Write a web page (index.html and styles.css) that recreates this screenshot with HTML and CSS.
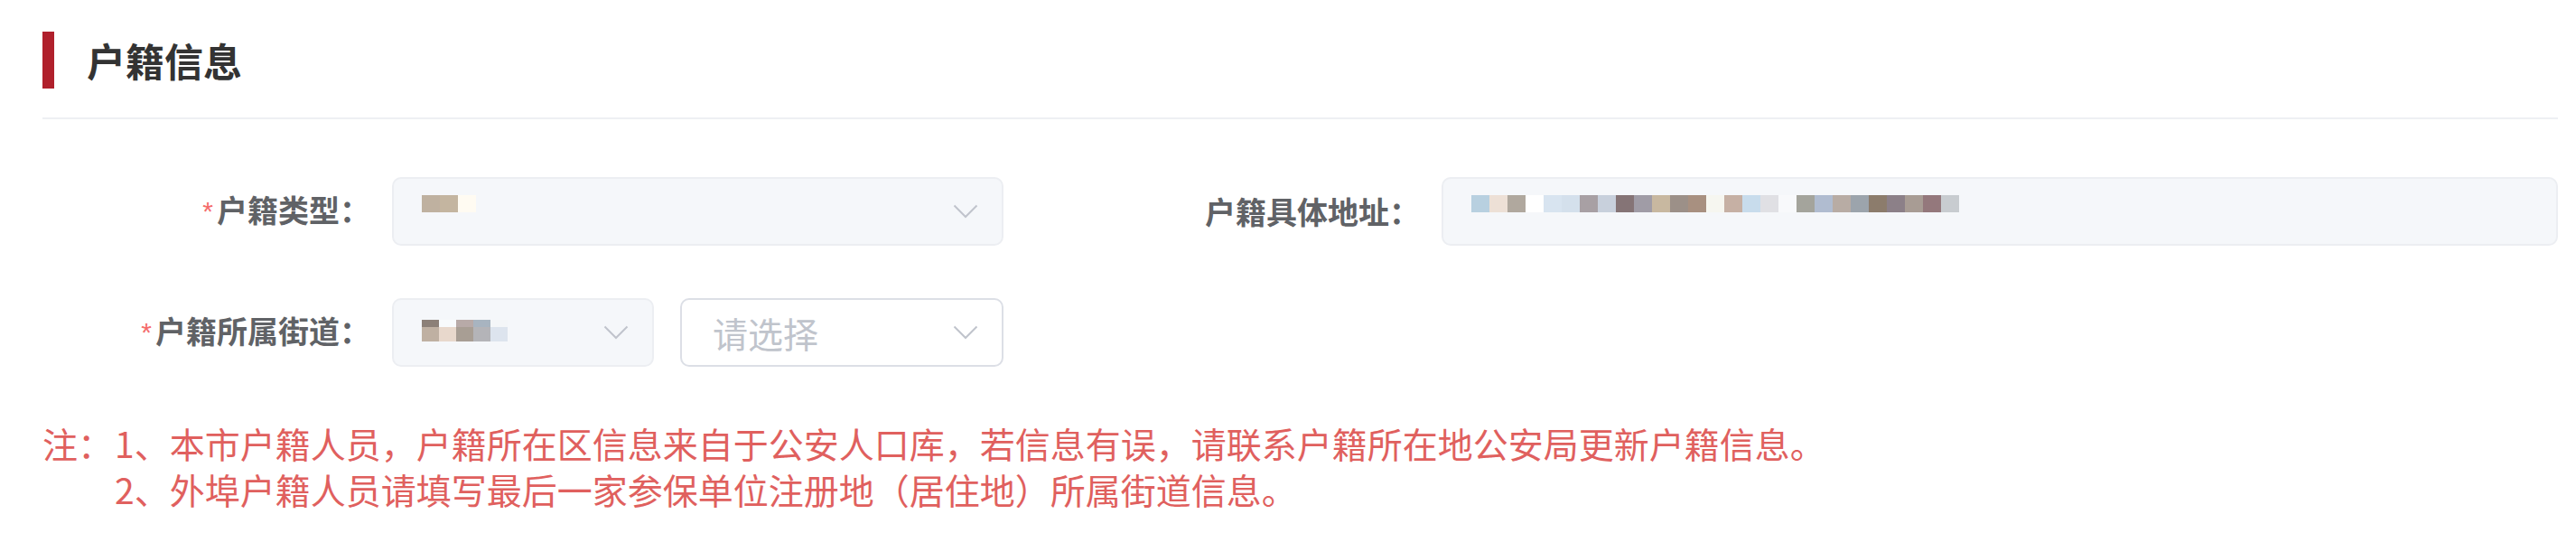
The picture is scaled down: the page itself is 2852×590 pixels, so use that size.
FILE: index.html
```html
<!DOCTYPE html>
<html lang="zh-CN">
<head>
<meta charset="utf-8">
<title>户籍信息</title>
<link rel="stylesheet" href="styles.css">
</head>
<body>
<div class="page">
  <div class="section-head">
    <span class="bar"></span>
    <h2 class="title">户籍信息</h2>
  </div>
  <div class="divider"></div>

  <div class="form">
    <div class="row">
      <div class="item item-left">
        <label class="label"><span class="req">*</span>户籍类型：</label>
        <div class="control select disabled type-select">
          <div class="mosaic">
            <span style="background:#bfb1a0"></span><span style="background:#c4b5a0"></span><span style="background:#fffbf2"></span>
          </div>
          <svg class="chev" viewBox="0 0 28 16" width="28" height="16"><polyline points="1.5,1.5 14,14 26.5,1.5" fill="none" stroke="#c0c4cc" stroke-width="2"/></svg>
        </div>
      </div>
      <div class="item item-right">
        <label class="label">户籍具体地址：</label>
        <div class="control input disabled">
          <div class="mosaic">
            <span style="background:#b8d0e0"></span><span style="background:#ede0d6"></span><span style="background:#b0a89e"></span><span style="background:#ffffff"></span><span style="background:#d8e4f0"></span><span style="background:#d4e0ec"></span><span style="background:#a8a0a4"></span><span style="background:#c8d0dc"></span><span style="background:#857476"></span><span style="background:#a09ca6"></span><span style="background:#c8b8a0"></span><span style="background:#9c9088"></span><span style="background:#a89080"></span><span style="background:#f6f6f0"></span><span style="background:#c6b0a4"></span><span style="background:#c8dcec"></span><span style="background:#e0e0e4"></span><span style="background:#f8f9fb"></span><span style="background:#a4a49c"></span><span style="background:#b0bcd0"></span><span style="background:#b8aca4"></span><span style="background:#9ca4ac"></span><span style="background:#8c7c6c"></span><span style="background:#8c8088"></span><span style="background:#a89c94"></span><span style="background:#94787c"></span><span style="background:#c8ccd0"></span>
          </div>
        </div>
      </div>
    </div>

    <div class="row">
      <div class="item item-left">
        <label class="label"><span class="req">*</span>户籍所属街道：</label>
        <div class="controls">
          <div class="control select disabled district-select">
            <div class="mosaic two-rows">
              <div class="mrow top">
                <span style="background:#8c8078"></span><span style="background:#f8fafc"></span><span style="background:#b8aaa8"></span><span style="background:#a8b4c0"></span><span style="background:#f4f6f8"></span>
              </div>
              <div class="mrow">
                <span style="background:#bfb0a2"></span><span style="background:#e8d8cc"></span><span style="background:#a89e94"></span><span style="background:#b4b4b8"></span><span style="background:#dde4ee"></span>
              </div>
            </div>
            <svg class="chev" viewBox="0 0 28 16" width="28" height="16"><polyline points="1.5,1.5 14,14 26.5,1.5" fill="none" stroke="#c0c4cc" stroke-width="2"/></svg>
          </div>
          <div class="control select street-select">
            <span class="placeholder">请选择</span>
            <svg class="chev" viewBox="0 0 28 16" width="28" height="16"><polyline points="1.5,1.5 14,14 26.5,1.5" fill="none" stroke="#c0c4cc" stroke-width="2"/></svg>
          </div>
        </div>
      </div>
    </div>
  </div>

  <div class="notes">
    <div class="note-line"><span class="note-lead">注：</span><span>1、本市户籍人员，户籍所在区信息来自于公安人口库，若信息有误，请联系户籍所在地公安局更新户籍信息。</span></div>
    <div class="note-line"><span class="note-lead"></span><span>2、外埠户籍人员请填写最后一家参保单位注册地（居住地）所属街道信息。</span></div>
  </div>
</div>
</body>
</html>
```

FILE: styles.css
```css
* { box-sizing: border-box; }

html, body {
  margin: 0;
  padding: 0;
  background: #ffffff;
}

body {
  font-family: "Noto Sans CJK SC", "Noto Sans", "Liberation Sans", sans-serif;
  color: #606266;
}

.page {
  width: 2852px;
  padding: 35px 20px 0 47px;
}

.section-head {
  display: flex;
  align-items: center;
  height: 63px;
}

.bar {
  width: 13px;
  height: 63px;
  background: #b0202c;
  flex: none;
}

.title {
  margin: 0 0 0 36px;
  font-size: 43px;
  line-height: 63px;
  font-weight: 700;
  color: #333333;
}

.divider {
  margin-top: 32px;
  height: 2px;
  background: #eef0f3;
}

.form {
  margin-top: 64px;
  display: flex;
  flex-direction: column;
  gap: 58px;
}

.row {
  display: grid;
  grid-template-columns: 1064px 1fr;
  column-gap: 98px;
}

.item {
  display: flex;
  align-items: center;
  height: 76px;
}

.label {
  flex: none;
  width: 387px;
  padding-right: 24px;
  text-align: right;
  font-size: 34px;
  font-weight: 700;
  color: #606266;
  line-height: 76px;
  white-space: nowrap;
}

.req {
  color: #f56c6c;
  font-family: "Liberation Sans", sans-serif;
  font-weight: 400;
  font-size: 30px;
  margin-right: 4px;
  position: relative;
  top: -2px;
}

.control {
  height: 76px;
  border-radius: 10px;
  border: 2px solid #e4e7ed;
  display: flex;
  align-items: center;
  padding: 0 26px 0 31px;
}

.control.disabled {
  background: #f5f7fa;
  border-color: #eceef2;
}

.type-select { flex: 1; }

.item-right .input { flex: 1; }

.controls {
  flex: 1;
  display: flex;
  gap: 29px;
}

.district-select { width: 290px; flex: none; }

.street-select {
  flex: 1;
  background: #ffffff;
  border-color: #dcdfe6;
  padding-left: 34px;
}

.placeholder {
  font-size: 39px;
  color: #c0c4cc;
}

.chev {
  margin-left: auto;
  flex: none;
}

.mosaic {
  display: flex;
  height: 19px;
  margin-top: -18px;
}

.mosaic span {
  display: block;
  width: 20px;
  height: 19px;
}

.mosaic.two-rows {
  flex-direction: column;
  height: auto;
  margin-top: -4px;
}

.mrow {
  display: flex;
}

.mrow span {
  width: 19px;
  height: 16px;
}

.mrow.top span {
  height: 8px;
}

.notes {
  margin-top: 59px;
  color: #e0605e;
  font-size: 39px;
  line-height: 51px;
}

.note-line {
  display: flex;
  white-space: nowrap;
}

.note-lead {
  display: inline-block;
  width: 80px;
  flex: none;
}
```
